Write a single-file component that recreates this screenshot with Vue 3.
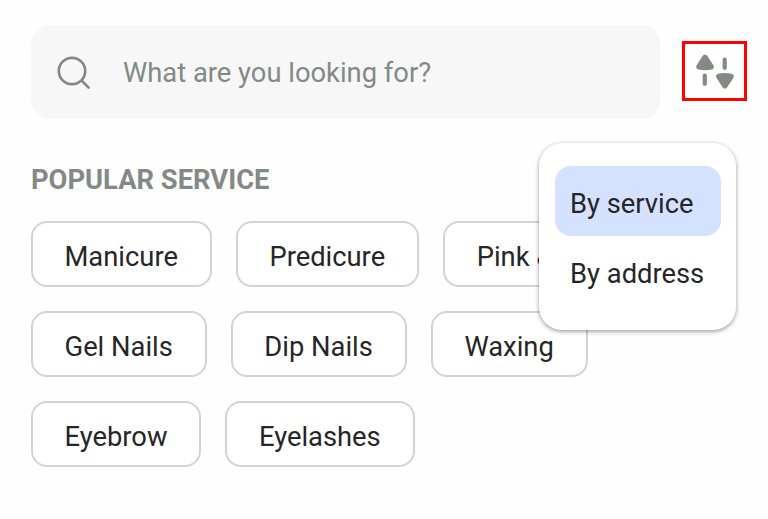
<template>
  <main class="page">
    <div class="search-row">
      <label class="search-box">
        <svg class="search-icon" viewBox="0 0 34 34" fill="none" stroke="#838a85" stroke-width="2.7" stroke-linecap="round">
          <circle cx="15" cy="15" r="13.2" />
          <path d="M24.8 24.8 L31.6 31.6" />
        </svg>
        <input v-model="search" type="text" placeholder="What are you looking for?">
      </label>

      <div class="sort">
        <button class="sort-button" aria-label="Search by" @click="showMenu = !showMenu">
          <svg width="38" height="36" viewBox="0 0 38 36" fill="#838a85" stroke="#838a85" stroke-linecap="round" stroke-linejoin="round">
            <path d="M9 4.5 L15 13.8 Q9 15.2 3 13.8 Z" stroke-width="5.6" />
            <path d="M8.8 22.6 V30.8" stroke-width="4.2" />
            <path d="M28.7 6.6 V14.8" stroke-width="4.2" />
            <path d="M28.9 32.7 L34.9 23.4 Q28.9 22 22.9 23.4 Z" stroke-width="5.6" />
          </svg>
        </button>

        <!-- Search mode menu -->
        <ul v-if="showMenu" class="menu">
          <li
            v-for="option in options"
            :key="option"
            :class="{ active: option === selected }"
            @click="selectOption(option)"
          >{{ option }}</li>
        </ul>
      </div>
    </div>

    <h2>POPULAR SERVICE</h2>

    <div class="services">
      <button v-for="service in services" :key="service" class="service" @click="search = service">{{ service }}</button>
    </div>
  </main>
</template>

<script setup>
import { ref } from 'vue';

const services = ['Manicure', 'Predicure', 'Pink & White', 'Gel Nails', 'Dip Nails', 'Waxing', 'Eyebrow', 'Eyelashes'];
const options = ['By service', 'By address'];

const search = ref('');
const selected = ref('By service');
const showMenu = ref(true);

const selectOption = (option) => {
  selected.value = option;
  showMenu.value = false;
}
</script>

<style>
body {
  margin: 0;
  background-color: #fefefe;
}
</style>

<style scoped>
.page {
  box-sizing: border-box;
  height: 519px;
  padding: 25px 21px 0 31px;
  font-family: Roboto, "Liberation Sans", sans-serif;
  font-size: 27.35px;
  color: #252627;
  overflow: hidden;
}

.search-row {
  display: flex;
  align-items: flex-start;
  gap: 22px;
}

.search-box {
  display: flex;
  flex: 1;
  align-items: center;
  box-sizing: border-box;
  height: 94px;
  padding: 2px 26px 0;
  gap: 32px;
  background-color: #f7f7f7;
  border-radius: 19px;
}

.search-icon {
  width: 34px;
  height: 34px;
  flex-shrink: 0;
}

.search-box input {
  flex: 1;
  min-width: 0;
  padding: 0;
  border: none;
  outline: none;
  background: none;
  font: inherit;
  color: #252627;
}

.search-box input::placeholder {
  color: #838a85;
  opacity: 1;
}

.sort {
  position: relative;
  margin-top: 16px;
}

.sort-button {
  display: flex;
  align-items: center;
  justify-content: center;
  box-sizing: border-box;
  width: 65px;
  height: 60px;
  padding: 0;
  border: 3px solid #ff0000;
  background: none;
  cursor: pointer;
}

/* Dropdown laid over the chips */
.menu {
  position: absolute;
  top: 102px;
  right: 11px;
  z-index: 1;
  box-sizing: border-box;
  width: 197px;
  margin: 0;
  padding: 23px 15px 24px 16px;
  list-style: none;
  background-color: #fff;
  border-radius: 23px;
  box-shadow: 0 2px 4px rgba(0, 0, 0, 0.3), 0 0 4px rgba(0, 0, 0, 0.12);
}

.menu li {
  height: 70px;
  padding-left: 15px;
  border-radius: 16px;
  line-height: 76px;
  white-space: nowrap;
  cursor: pointer;
}

.menu li.active {
  background-color: #d5e2ff;
}

h2 {
  margin: 46px 0 25px;
  font-size: 27.35px;
  font-weight: 700;
  line-height: 31px;
  color: #838a85;
}

.services {
  display: flex;
  flex-wrap: wrap;
  gap: 24px;
}

.service {
  box-sizing: border-box;
  height: 66px;
  padding: 5px 32px 0 31.5px;
  border: 2px solid #d3d3d3;
  border-radius: 16px;
  background-color: #fff;
  font: inherit;
  color: inherit;
  cursor: pointer;
}
</style>
